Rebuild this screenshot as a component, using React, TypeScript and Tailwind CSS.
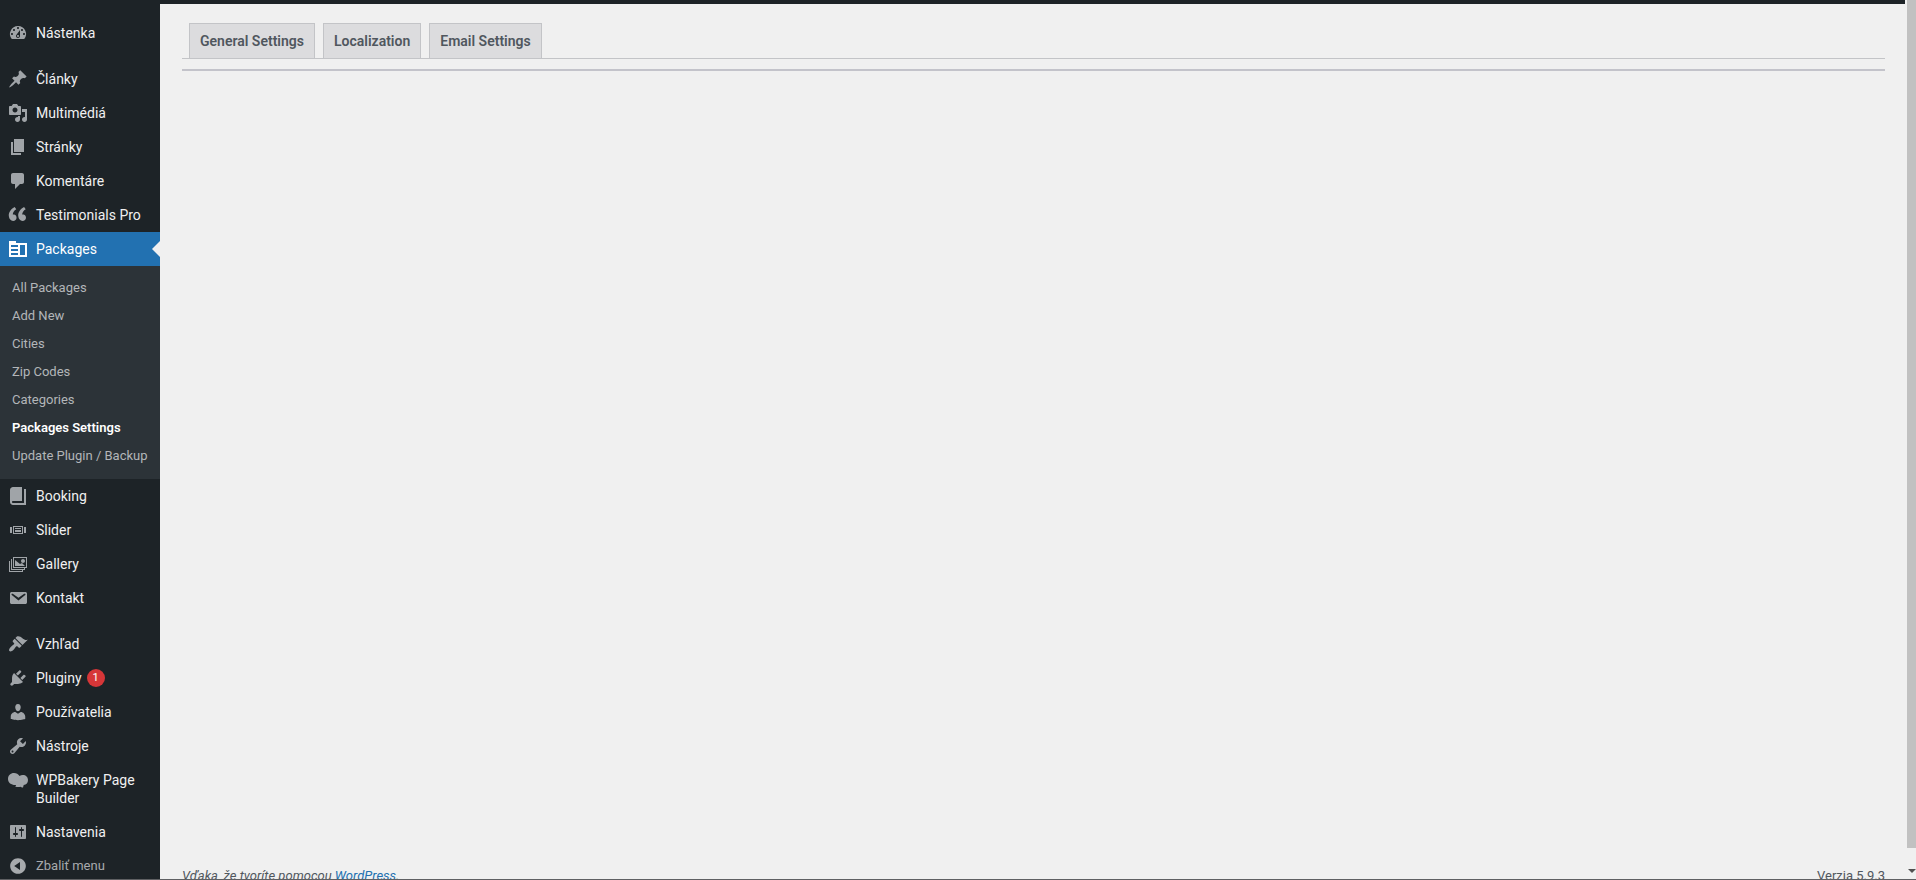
import React from "react";

type MenuEntry = {
  label: string;
  icon: string;
  badge?: number;
  current?: boolean;
};

// 20x20 glyphs
const icons: Record<string, string> = {
  dashboard:
    "M3.76 16h12.48A7.998 7.998 0 0 0 10 3a7.998 7.998 0 0 0-6.24 13zM10 4c.55 0 1 .45 1 1s-.45 1-1 1-1-.45-1-1 .45-1 1-1zM6 6c.55 0 1 .45 1 1s-.45 1-1 1-1-.45-1-1 .45-1 1-1zm8 0c.55 0 1 .45 1 1s-.45 1-1 1-1-.45-1-1 .45-1 1-1zm-5.37 5.55L12 7v6c0 1.1-.9 2-2 2s-2-.9-2-2c0-.57.24-1.08.63-1.45zM4 10c.55 0 1 .45 1 1s-.45 1-1 1-1-.45-1-1 .45-1 1-1zm12 0c.55 0 1 .45 1 1s-.45 1-1 1-1-.45-1-1 .45-1 1-1zm-5 3c0-.55-.45-1-1-1s-1 .45-1 1 .45 1 1 1 1-.45 1-1z",
  post: "M10.44 3.02l1.82-1.82 6.36 6.35-1.83 1.82c-1.05-.68-2.48-.57-3.41.36l-.75.75c-.92.93-1.04 2.35-.35 3.41l-1.83 1.82-2.41-2.41-2.8 2.79c-.42.42-3.38 2.71-3.8 2.29s1.86-3.39 2.28-3.81l2.79-2.79L4.1 9.36l1.83-1.82c1.05.69 2.48.57 3.4-.36l.75-.75c.93-.92 1.05-2.35.36-3.41z",
  media:
    "M13 11V4c0-.55-.45-1-1-1h-1.67L9 1H5L3.67 3H2c-.55 0-1 .45-1 1v7c0 .55.45 1 1 1h10c.55 0 1-.45 1-1zM7 4.5c1.38 0 2.5 1.12 2.5 2.5S8.38 9.5 7 9.5 4.5 8.38 4.5 7 5.62 4.5 7 4.5zM14 6h5v10.5c0 1.38-1.12 2.5-2.5 2.5S14 17.88 14 16.5s1.12-2.5 2.5-2.5c.17 0 .34.02.5.05V9h-3V6zm-4 8.05V13h2v3.5c0 1.38-1.12 2.5-2.5 2.5S7 17.88 7 16.5 8.12 14 9.5 14c.17 0 .34.02.5.05z",
  page: "M6 15V2h10v13H6zm-1 1h8v2H3V5h2v11z",
  comments:
    "M5 2h9c1.1 0 2 .9 2 2v7c0 1.1-.9 2-2 2h-2l-5 5v-5H5c-1.1 0-2-.9-2-2V4c0-1.1.9-2 2-2z",
  quote:
    "M8.54 12.74c0-.87-.24-1.61-.72-2.22-.73-.92-2.14-1.03-2.96-.85-.34-1.93 1.3-4.39 3.42-5.45L6.65 1.94C3.45 3.46.31 6.96.85 11.37 1.19 14.16 2.8 16 5.08 16c1 0 1.83-.29 2.48-.88.66-.59.98-1.38.98-2.38zm9.43 0c0-.87-.24-1.61-.72-2.22-.73-.92-2.14-1.03-2.96-.85-.34-1.93 1.3-4.39 3.42-5.45l-1.63-2.28c-3.2 1.52-6.34 5.02-5.8 9.43.34 2.79 1.95 4.63 4.23 4.63 1 0 1.83-.29 2.48-.88.66-.59.98-1.38.98-2.38z",
  packages:
    "M1 2h7v2h11v14H1V2zm2 4v2h7V6H3zm0 4v2h7v-2H3zm0 4v2h7v-2H3zm9-8v10h5V6h-5z",
  book: "M16 3h2v16H5c-1.66 0-3-1.34-3-3V4c0-1.66 1.34-3 3-3h9v14H5c-.55 0-1 .45-1 1s.45 1 1 1h11V3z",
  slides:
    "M5 14V6h10v8H5zm-3-1V7h2v6H2zm4-6v6h8V7H6zm10 0h2v6h-2V7zm-3 2V8H7v1h6zm0 3v-2H7v2h6z",
  gallery:
    "M5 3h14v11H5V3zm1 1v9h12V4H6zm9 1c1.1 0 2 .9 2 2s-.9 2-2 2-2-.9-2-2 .9-2 2-2zM7 6l5 4 2-1 3 3H7V6zM3 5h1v10h12v-1h1v2H3V5zM1 7h1v10h12v-1h1v2H1V7z",
  email:
    "M3.87 4h13.25C18.37 4 19 4.59 19 5.79v8.42c0 1.19-.63 1.79-1.88 1.79H3.87c-1.25 0-1.88-.6-1.88-1.79V5.79c0-1.2.63-1.79 1.88-1.79zm6.62 8.6l6.74-5.53c.24-.2.43-.66.13-1.07-.29-.41-.82-.42-1.17-.17l-5.7 3.86L4.8 5.83c-.35-.25-.88-.24-1.17.17-.3.41-.11.87.13 1.07z",
  appearance:
    "M14.48 11.06L7.41 3.99l1.5-1.5c.5-.56 2.3-.47 3.51.32 1.21.8 1.43 1.28 2.91 2.1 1.18.64 2.45 1.26 4.45.85zm-.71.71L6.7 4.7 4.93 6.47c-.39.39-.39 1.02 0 1.41l1.06 1.06c.39.39.39 1.03 0 1.42-.6.6-1.43 1.11-2.21 1.69-.35.26-.7.53-1.01.84C1.43 14.23.4 16.08 1.4 17.07c.99 1 2.84-.03 4.18-1.36.31-.31.58-.66.85-1.02.57-.78 1.08-1.61 1.69-2.21.39-.39 1.02-.39 1.41 0l1.06 1.06c.39.39 1.02.39 1.41 0z",
  plugins:
    "M13.11 4.36L9.87 7.6 8 5.73l3.24-3.24c.35-.34 1.05-.2 1.56.32.52.51.66 1.21.31 1.55zm-8 1.77l.91-1.12 9.01 9.01-1.19.84c-.71.71-2.63 1.16-3.82 1.16H6.14L4.9 17.26c-.59.59-1.54.59-2.12 0-.59-.58-.59-1.53 0-2.12l1.24-1.24v-3.88c0-1.13.4-3.19 1.09-3.89zm7.26 3.97l3.24-3.24c.34-.35 1.04-.21 1.55.31.52.51.66 1.21.31 1.55l-3.24 3.25z",
  users:
    "M10 9.25c-2.27 0-2.73-3.44-2.73-3.44C7 4.02 7.82 2 9.97 2c2.16 0 2.98 2.02 2.71 3.81 0 0-.41 3.44-2.68 3.44zm0 2.57L12.72 10c2.39 0 4.52 2.33 4.52 4.53v2.49s-3.65 1.13-7.24 1.13c-3.65 0-7.24-1.13-7.24-1.13v-2.49c0-2.25 1.94-4.48 4.47-4.48z",
  tools:
    "M16.68 9.77c-1.34 1.34-3.3 1.67-4.95.99l-5.41 6.52c-.99.99-2.59.99-3.58 0s-.99-2.59 0-3.57l6.52-5.42c-.68-1.65-.35-3.61.99-4.95 1.28-1.28 3.12-1.62 4.72-1.06l-2.89 2.89 2.82 2.82 2.86-2.87c.53 1.58.18 3.39-1.08 4.65zM3.81 16.21c.4.39 1.04.39 1.43 0 .4-.4.4-1.04 0-1.43-.39-.4-1.03-.4-1.43 0-.39.39-.39 1.03 0 1.43z",
  bakery:
    "M6 3c2.400 0 4.300 1 5.500 3 1-.7 2-1 3.300-1C17.800 5 20 7 20 10c0 2.800-1.600 4.700-4.300 5L15 17.500c-1.300 0-2-.3-2.600-.8-1.700.5-3.700.3-5.200-.3.500-.4.800-.9.900-1.400C3.500 15.300 0 13 0 9c0-3.500 2.500-6 6-6z",
  settings:
    "M18 16V4c0-.55-.45-1-1-1H3c-.55 0-1 .45-1 1v12c0 .55.45 1 1 1h14c.55 0 1-.45 1-1zM8 11h1c.55 0 1 .45 1 1s-.45 1-1 1H8v1.500c0 .28-.22.5-.5.5s-.5-.22-.5-.5V13H6c-.55 0-1-.45-1-1s.45-1 1-1h1V5.500c0-.28.22-.5.5-.5s.5.22.5.5V11zm5-2h-1c-.55 0-1-.45-1-1s.45-1 1-1h1V5.500c0-.28.22-.5.5-.5s.5.22.5.5V7h1c.55 0 1 .45 1 1s-.45 1-1 1h-1v5.500c0 .28-.22.5-.5.5s-.5-.22-.5-.5V9z",
  collapse:
    "M10 2.160c4.330 0 7.840 3.510 7.840 7.840s-3.510 7.840-7.840 7.840S2.160 14.330 2.160 10 5.710 2.160 10 2.160zm2 11.720V6.120L6.180 9.970z",
};

const mainMenu: MenuEntry[][] = [
  [{ label: "Nástenka", icon: "dashboard" }],
  [
    { label: "Články", icon: "post" },
    { label: "Multimédiá", icon: "media" },
    { label: "Stránky", icon: "page" },
    { label: "Komentáre", icon: "comments" },
    { label: "Testimonials Pro", icon: "quote" },
    { label: "Packages", icon: "packages", current: true },
    { label: "Booking", icon: "book" },
    { label: "Slider", icon: "slides" },
    { label: "Gallery", icon: "gallery" },
    { label: "Kontakt", icon: "email" },
  ],
  [
    { label: "Vzhľad", icon: "appearance" },
    { label: "Pluginy", icon: "plugins", badge: 1 },
    { label: "Používatelia", icon: "users" },
    { label: "Nástroje", icon: "tools" },
    { label: "WPBakery Page Builder", icon: "bakery" },
    { label: "Nastavenia", icon: "settings" },
  ],
];

const subMenu = [
  "All Packages",
  "Add New",
  "Cities",
  "Zip Codes",
  "Categories",
  "Packages Settings",
  "Update Plugin / Backup",
];

const tabs = ["General Settings", "Localization", "Email Settings"];

const Icon = ({ name }: { name: string }) => (
  <span className="flex w-9 shrink-0 justify-center pt-[7px]">
    <svg
      viewBox="0 0 20 20"
      className="h-5 w-5"
      fill="currentColor"
      fillRule="evenodd"
      aria-hidden="true"
    >
      <path d={icons[name]} />
    </svg>
  </span>
);

const SubMenu = () => (
  <ul className="bg-[#2c3338] pt-2 pb-[9px]">
    {subMenu.map((item) => (
      <li key={item}>
        <a
          href="#"
          className={`block px-3 py-[5px] text-[13px] leading-[18px] whitespace-nowrap ${
            item === "Packages Settings"
              ? "font-semibold text-white"
              : "text-[#b3b6b9]"
          }`}
        >
          {item}
        </a>
      </li>
    ))}
  </ul>
);

const MenuItem = ({ item }: { item: MenuEntry }) => (
  <li>
    <a
      href="#"
      className={`relative flex text-sm leading-[18px] ${
        item.current ? "bg-[#2271b1] text-white" : "text-[#f0f0f1]"
      }`}
    >
      <span className={item.current ? "text-white" : "text-[#a0a4a8]"}>
        <Icon name={item.icon} />
      </span>
      <span className="flex-1 py-2 pr-2">
        {item.label}
        {item.badge && (
          <span className="ml-[5px] inline-block h-[18px] w-[18px] rounded-full bg-[#d63638] text-center align-top text-[11px] leading-[18px] text-white">
            {item.badge}
          </span>
        )}
      </span>
      {item.current && (
        <span className="absolute top-1/2 right-0 -mt-2 border-8 border-l-0 border-transparent border-r-[#f0f0f1]" />
      )}
    </a>
    {item.current && <SubMenu />}
  </li>
);

const Sidebar = () => (
  <nav className="w-40 shrink-0 bg-[#1d2327] pt-4">
    {mainMenu.map((group, index) => (
      <ul key={index} className={index > 0 ? "mt-3" : ""}>
        {group.map((item) => (
          <MenuItem key={item.label} item={item} />
        ))}
      </ul>
    ))}
    <button
      type="button"
      className="flex w-full text-left text-[13px] leading-[18px] text-[#a7aaad]"
    >
      <Icon name="collapse" />
      <span className="py-2">Zbaliť menu</span>
    </button>
  </nav>
);

const Scrollbar = () => (
  <div className="flex w-[11px] shrink-0 flex-col items-end bg-[#f0f0f0]">
    <div className="w-[9px] flex-1 bg-[#c1c1c1]" />
    <div className="flex h-[31px] w-[9px] items-end justify-center pb-[6px]">
      <span className="border-4 border-b-0 border-transparent border-t-[#505050]" />
    </div>
  </div>
);

const App = () => {
  return (
    <div className="flex h-screen overflow-hidden border-b border-[#5f6063] bg-[#f0f0f0] font-[Roboto,sans-serif] text-[13px] text-[#50575e]">
      <Sidebar />
      <div className="flex min-w-0 flex-1 flex-col">
        <div className="h-1 shrink-0 bg-[#1d2327]" />
        <main className="ml-[22px] mr-5 flex-1 pt-[19px]">
          <div className="flex gap-2 border-b border-[#c3c4c7] pl-[7px]">
            {tabs.map((tab) => (
              <button
                key={tab}
                type="button"
                className="border border-b-0 border-[#c3c4c7] bg-[#dcdcde] px-[10px] py-[5px] text-sm leading-6 font-semibold"
              >
                {tab}
              </button>
            ))}
          </div>
          <hr className="mt-[10px] border-t-2 border-[#c3c3ca]" />
        </main>
        <footer className="ml-[22px] mr-5 flex h-[13px] shrink-0 justify-between leading-5">
          <p className="italic">
            Vďaka, že tvoríte pomocou{" "}
            <a href="#" className="text-[#2271b1] underline">
              WordPress
            </a>
            .
          </p>
          <p>Verzia 5.9.3</p>
        </footer>
      </div>
      <Scrollbar />
    </div>
  );
};

export default App;
